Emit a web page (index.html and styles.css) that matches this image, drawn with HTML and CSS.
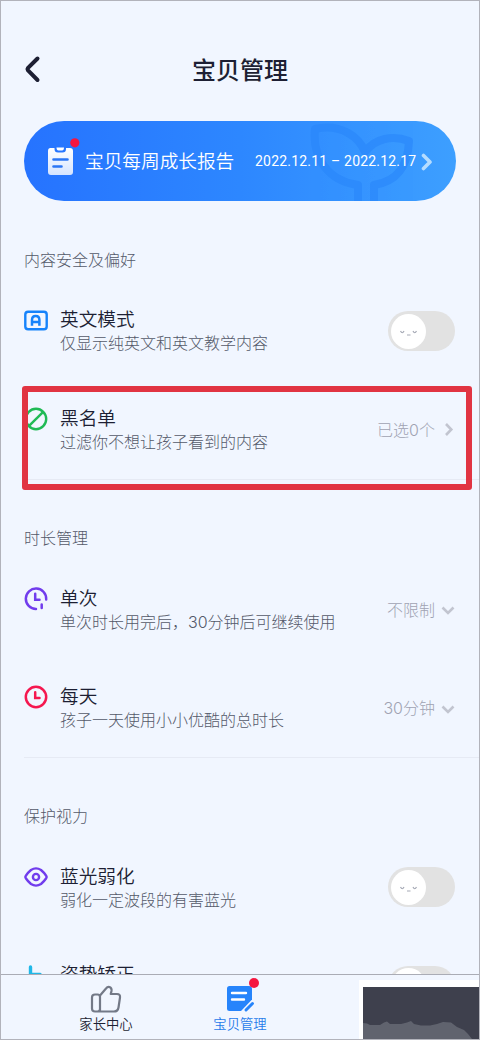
FILE: index.html
```html
<!DOCTYPE html>
<html lang="zh-CN">
<head>
<meta charset="utf-8">
<title>宝贝管理</title>
<link rel="stylesheet" href="styles.css">
</head>
<body>
<div class="screen">
  <main class="content">
    <header class="header">
      <svg class="back" width="20" height="30" viewBox="0 0 20 30"><path d="M14.500 4.500 4.800 14.200Q4 15.200 4.800 16.200L14.500 26" fill="none" stroke="#1d1f33" stroke-width="4" stroke-linecap="round" stroke-linejoin="round"/></svg>
      <h1 class="title">宝贝管理</h1>
    </header>

    <section class="banner">
      <svg class="sprout" width="112" height="80" viewBox="0 0 112 80"><path d="M51 84V64C22 60 5 38 8 8C34 2 52 16 58 31C68 17 86 14 102 20C101 43 92 60 67 64V84" fill="none" stroke="#2886fa" stroke-width="8" stroke-linejoin="round"/></svg>
      <svg class="report" width="34" height="40" viewBox="0 0 34 40">
        <defs><linearGradient id="paper" x1="0" y1="0" x2="0" y2="1"><stop offset="0" stop-color="#fff"/><stop offset="1" stop-color="#d5e4ff"/></linearGradient></defs>
        <path d="M3.500 10H7.500V11Q7.500 14.500 11 14.500H15.500Q19 14.500 19 11V10H23Q26 10 26 13V34Q26 37 23 37H4Q1 37 1 34V13Q1 10 3.500 10Z" fill="url(#paper)"/>
        <path d="M9.500 9.500H17Q17 12.500 15 12.500H11.500Q9.500 12.500 9.500 9.500Z" fill="#fff"/>
        <path d="M6.500 21.500H20.500M6.500 28.500H14.500" stroke="#2b76f5" stroke-width="2.600" stroke-linecap="round"/>
        <circle cx="27.800" cy="4.800" r="4.600" fill="#f5163f"/>
      </svg>
      <span class="banner-title">宝贝每周成长报告</span>
      <span class="banner-date">2022.12.11 – 2022.12.17</span>
      <svg class="banner-arrow" width="12" height="20" viewBox="0 0 12 20"><path d="M2.500 3.500 9 10 2.500 16.500" fill="none" stroke="#b5dcff" stroke-width="3.600" stroke-linecap="round" stroke-linejoin="round"/></svg>
    </section>

    <section class="group">
      <h2 class="label">内容安全及偏好</h2>
      <div class="row">
        <svg class="icon" viewBox="0 0 24 24"><rect x="1.300" y="3.800" width="21.400" height="17.400" rx="2.800" fill="none" stroke="#1683fb" stroke-width="2.400"/><path d="M8 17.800V12Q8 8 11.700 8Q15.400 8 15.400 12V17.800M8 14H15.400" fill="none" stroke="#1683fb" stroke-width="2.500"/></svg>
        <div class="text"><h3 class="name">英文模式</h3><p class="desc">仅显示纯英文和英文教学内容</p></div>
        <div class="toggle"><svg class="knob" viewBox="0 0 35 35"><path d="M9.500 17Q11.300 20.500 13 17M22 17Q23.700 20.500 25.500 17M16 21H19.500" fill="none" stroke="#a5a9b5" stroke-width="1.200"/></svg></div>
      </div>
      <div class="row">
        <svg class="icon" viewBox="0 0 24 24"><circle cx="12" cy="12" r="10.200" fill="none" stroke="#20ba55" stroke-width="2.400"/><path d="M4.800 19.200 19.200 4.800" stroke="#20ba55" stroke-width="2.400"/></svg>
        <div class="text"><h3 class="name">黑名单</h3><p class="desc">过滤你不想让孩子看到的内容</p></div>
        <span class="value">已选<span class="num">0</span>个</span>
        <svg class="arrow" viewBox="0 0 14 14"><path d="M5 2 10.300 7.500 5 13" fill="none" stroke="#c2c5d0" stroke-width="2.600"/></svg>
      </div>
      <div class="highlight"></div>
    </section>

    <section class="group">
      <h2 class="label">时长管理</h2>
      <div class="row">
        <svg class="icon" viewBox="0 0 24 24"><path d="M22.200 12.500A10.200 10.200 0 1 0 12 22M17.700 17.500V21M11.200 6.800V12.700H15.500" fill="none" stroke="#713ced" stroke-width="2.500" stroke-linecap="round"/></svg>
        <div class="text"><h3 class="name">单次</h3><p class="desc">单次时长用完后，<span class="num">30</span>分钟后可继续使用</p></div>
        <span class="value">不限制</span>
        <svg class="arrow" viewBox="0 0 14 14"><path d="M1.500 5.500 7 11 12.500 5.500" fill="none" stroke="#c2c5d0" stroke-width="2.600"/></svg>
      </div>
      <div class="row">
        <svg class="icon" viewBox="0 0 24 24"><circle cx="12" cy="12" r="10.200" fill="none" stroke="#f5174f" stroke-width="2.500"/><path d="M11.200 7.300V13H15.500" fill="none" stroke="#f5174f" stroke-width="2.500" stroke-linecap="round"/></svg>
        <div class="text"><h3 class="name">每天</h3><p class="desc">孩子一天使用小小优酷的总时长</p></div>
        <span class="value"><span class="num">30</span>分钟</span>
        <svg class="arrow" viewBox="0 0 14 14"><path d="M1.500 5.500 7 11 12.500 5.500" fill="none" stroke="#c2c5d0" stroke-width="2.600"/></svg>
      </div>
    </section>

    <section class="group">
      <h2 class="label">保护视力</h2>
      <div class="row">
        <svg class="icon" viewBox="0 0 24 24"><path d="M2 10.500Q4 7.500 7 5Q12 1.800 17 5Q20 7.500 22 10.500Q23.200 12 22 13.500Q20 16.500 17 19Q12 22.200 7 19Q4 16.500 2 13.500Q.8 12 2 10.500Z" fill="none" stroke="#713ced" stroke-width="2.400"/><circle cx="12" cy="12" r="3.100" fill="none" stroke="#713ced" stroke-width="2.400"/></svg>
        <div class="text"><h3 class="name">蓝光弱化</h3><p class="desc">弱化一定波段的有害蓝光</p></div>
        <div class="toggle"><svg class="knob" viewBox="0 0 35 35"><path d="M9.500 17Q11.300 20.500 13 17M22 17Q23.700 20.500 25.500 17M16 21H19.500" fill="none" stroke="#a5a9b5" stroke-width="1.200"/></svg></div>
      </div>
      <div class="row">
        <svg class="icon" viewBox="0 0 24 24"><path d="M6.500 4V20M6.500 11.500H16" fill="none" stroke="#20b8e8" stroke-width="3.400" stroke-linecap="round"/></svg>
        <div class="text"><h3 class="name">姿势矫正</h3></div>
        <div class="toggle"><svg class="knob" viewBox="0 0 35 35"></svg></div>
      </div>
    </section>
  </main>

  <nav class="tabs">
    <div class="tab">
      <svg class="tab-icon" viewBox="0 0 34 30"><path d="M11 11.500V27.500M6 10.500H8.500Q11 10.500 11 13V25Q11 27.500 8.500 27.500H6Q3 27.500 3 24.500V13.500Q3 10.500 6 10.500ZM11 11.500 17 4.500Q18.500 2.500 20.500 3Q23 4 22.500 7L21.700 10H28Q31.500 10 31 13.500L29.500 23.500Q28.900 27.500 25 27.500H8" fill="none" stroke="#737987" stroke-width="2.200" stroke-linejoin="round"/></svg>
      <span class="tab-name">家长中心</span>
    </div>
    <div class="tab tab-active">
      <svg class="tab-icon" viewBox="0 0 34 30"><path d="M6.500 2H26Q29 2 29 5V15.500L18 27H6.500Q4 27 4 24.500V4.500Q4 2 6.500 2Z" fill="#2684fb"/><path d="M9 9H23M9 15.500H21" stroke="#fff" stroke-width="2.400" stroke-linecap="round"/><path d="M23 26 29.500 19.500" stroke="#2684fb" stroke-width="3" stroke-linecap="round"/></svg>
      <span class="tab-name">宝贝管理</span>
      <i class="dot"></i>
    </div>
  </nav>

  <svg class="corner" viewBox="0 0 121 60"><path d="M0 0H121V60H0Z" fill="#fff"/><path d="M4 7H121V59H4Z" fill="#3e404d"/><path d="M4 43 8 43.500 11 45H21L25 42.500 28 41.500 31 44H42L48 42.500 52 41 55 44 62 45.500H71L78 44 84 42 92 42.500 98 47 105 50 109 54 113 59H4Z" fill="#60636e"/></svg>
</div>
</body>
</html>
```
FILE: styles.css
```css
* { box-sizing: border-box; margin: 0; padding: 0; }
body {
  font-family: "Noto Sans CJK SC", sans-serif;
  font-weight: 300;
  color: #1d1f33;
}
.screen {
  position: relative;
  width: 480px;
  height: 1040px;
  display: flex;
  flex-direction: column;
  overflow: hidden;
  background: #f1f6ff;
  border: 1px solid #b2b3bb;
}
.content { flex: 1; min-height: 0; overflow: hidden; }
.header {
  display: grid;
  grid-template-columns: 60px 1fr 60px;
  align-items: center;
  height: 120px;
  padding-bottom: 16px;
}
.back { margin: 31px 0 0 22px; }
.title {
  margin-top: 31px;
  text-align: center;
  font-size: 24px;
  line-height: 34px;
  font-weight: 500;
}
.banner {
  position: relative;
  display: flex;
  align-items: center;
  height: 80px;
  margin: 0 23px;
  padding: 0 21px 0 23px;
  border-radius: 40px;
  overflow: hidden;
  color: #fff;
  background: linear-gradient(90deg, #2673ff, #2d87ff 50%, #3d9fff);
}
.sprout { position: absolute; left: 283px; top: 0; opacity: .6; }
.report { margin-top: -6px; flex: none; }
.banner-title {
  position: relative;
  margin: -3px 0 0 4px;
  width: 150px;
  font-size: 18.670px;
  font-weight: 350;
  white-space: nowrap;
}
.banner-date {
  position: relative;
  margin: -1px 0 0 20px;
  width: 162px;
  font-size: 14px;
  letter-spacing: .2px;
  font-family: Roboto, "Noto Sans CJK SC", sans-serif;
  font-weight: 400;
  white-space: nowrap;
}
.banner-arrow { position: relative; margin: 1px 0 0 4px; flex: none; }
.group {
  position: relative;
  margin: 46px 0 0 23px;
  padding-bottom: 10px;
  border-bottom: 1px solid #e6eaf4;
}
.group + .group { margin-top: 45px; padding-bottom: 9px; }
.group + .group .label { margin-bottom: 1px; }
.label { font-size: 16px; line-height: 24px; font-weight: 300; color: #545969; }
.row {
  display: flex;
  align-items: center;
  height: 99px;
  padding: 35px 24px 16px 0;
}
.group + .group .row + .row { margin-top: -1px; height: 100px; }
.icon { width: 24px; height: 24px; margin: 2px 12px 0 0; align-self: flex-start; flex: none; }
.text { flex: 1; align-self: flex-start; white-space: nowrap; }
.name { font-size: 18.670px; line-height: 24px; font-weight: 350; }
.desc { font-size: 16px; line-height: 24px; color: #545969; }
.value { font-size: 16px; line-height: 24px; color: #a0a3b2; }
.num { font-family: Inter, sans-serif; }
.arrow { width: 14px; height: 14px; margin-left: 6px; }
.toggle {
  width: 67px;
  height: 40px;
  margin-top: 2px;
  padding: 2.500px 3px;
  border-radius: 20px;
  background: #e2e2e2;
}
.group + .group .toggle { margin-top: 0; }
.knob { display: block; width: 35px; height: 35px; border-radius: 50%; background: #fff; }
.highlight {
  position: absolute;
  left: -2px;
  top: 139px;
  width: 450px;
  height: 104px;
  border: 6.500px solid #e13442;
  border-radius: 3px;
}
.tabs {
  display: flex;
  height: 65px;
  padding: 0 38px;
  border-top: 1px solid #aaacb5;
  background: #f1f6ff;
}
.tab {
  position: relative;
  width: 134px;
  display: flex;
  flex-direction: column;
  align-items: center;
  padding-top: 9px;
}
.tab-name { font-size: 13.330px; line-height: 20px; font-weight: 350; }
.tab-icon { width: 34px; height: 30px; }
.tab-active { color: #267bea; }
.dot {
  position: absolute;
  left: 76px;
  top: 3px;
  width: 10px;
  height: 10px;
  border-radius: 50%;
  background: #f5163f;
}
.corner { position: absolute; left: 358px; top: 979px; width: 121px; height: 60px; }
```
